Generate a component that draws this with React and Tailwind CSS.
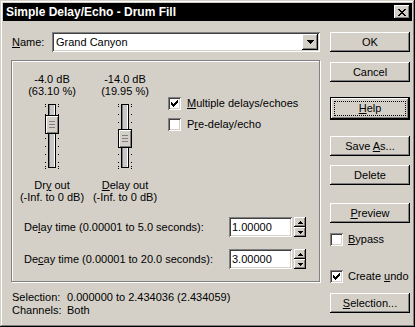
import React from "react";

const raised =
  "bg-[#d4d0c8] shadow-[inset_-1px_-1px_#000,inset_1px_1px_#fff,inset_-2px_-2px_#808080,inset_2px_2px_#d4d0c8]";
const sunken =
  "bg-white shadow-[inset_1px_1px_#808080,inset_-1px_-1px_#fff,inset_2px_2px_#404040,inset_-2px_-2px_#d4d0c8]";

function Pix({ rows, color = "#000" }) {
  const w = rows[0].length;
  const h = rows.length;
  const rects = [];
  rows.forEach((r, y) => {
    for (let x = 0; x < r.length; x++) {
      if (r[x] === "#") rects.push(<rect key={`${x}-${y}`} x={x} y={y} width="1" height="1" fill={color} />);
    }
  });
  return (
    <svg width={w} height={h} viewBox={`0 0 ${w} ${h}`} shapeRendering="crispEdges">
      {rects}
    </svg>
  );
}

const CHECK = ["......#", ".....##", "#...###", "##.###.", "#####..", ".###...", "..#...."];
const XMARK = ["##....##", ".##..##.", "..####..", "...##...", "..####..", ".##..##.", "##....##"];
const DOWN = ["#######", ".#####.", "..###..", "...#..."];
const SDOWN = ["#####", ".###.", "..#.."];
const SUP = ["..#..", ".###.", "#####"];

function U({ children }) {
  return <span className="underline underline-offset-[1px]">{children}</span>;
}

function Check({ checked }) {
  return (
    <div className={`${sunken} w-[13px] h-[13px] shrink-0 flex items-center justify-center`}>
      {checked && <Pix rows={CHECK} />}
    </div>
  );
}

function Btn({ children, className = "" }) {
  return (
    <div className={`${raised} w-[80px] h-[20px] flex items-center justify-center ${className}`}>
      <span className="whitespace-pre">{children}</span>
    </div>
  );
}

function Slider({ thumbTop }) {
  const ticks = [2, 4, 12, 20, 28, 36, 44, 52, 60, 64, 66];
  return (
    <div className="relative w-[16px] h-[68px] mt-[5px]">
      {ticks.map((t) => (
        <React.Fragment key={t}>
          <div className="absolute left-[1px] w-[1px] h-[1px] bg-black" style={{ top: t }} />
          <div className="absolute left-[14px] w-[1px] h-[1px] bg-black" style={{ top: t }} />
        </React.Fragment>
      ))}
      <div className="absolute left-[4px] top-[2px] w-[8px] h-[64px] border border-black bg-[#c8c8c8] shadow-[inset_-1px_0_#fff,inset_1px_0_#808080]" />
      <div
        className="absolute left-[1px] w-[14px] h-[19px] border border-black bg-[#d4d0c8] shadow-[inset_1px_1px_#fff,inset_-1px_-1px_#808080] flex flex-col items-center justify-center gap-[2px]"
        style={{ top: thumbTop }}
      >
        <div className="w-[6px] h-[1px] bg-[#808080]" />
        <div className="w-[6px] h-[1px] bg-[#808080]" />
        <div className="w-[6px] h-[1px] bg-[#808080]" />
      </div>
    </div>
  );
}

function SliderCol({ l1, l2, b1, thumbTop, className = "" }) {
  return (
    <div className={`w-[68px] flex flex-col items-center leading-[12px] ${className}`}>
      <div className="whitespace-nowrap">{l1}</div>
      <div className="whitespace-nowrap">{l2}</div>
      <Slider thumbTop={thumbTop} />
      <div className="mt-[9px] whitespace-nowrap">{b1}</div>
      <div className="whitespace-nowrap">(-Inf. to 0 dB)</div>
    </div>
  );
}

function Spin({ value, label, className = "" }) {
  return (
    <div className={`flex items-center h-[20px] pl-[12px] ${className}`}>
      <div className="w-[205px] whitespace-nowrap">{label}</div>
      <div className={`${sunken} w-[63px] h-[20px] flex items-center pl-[3px]`}>{value}</div>
      <div className="ml-[2px] w-[12px] h-[20px] flex flex-col">
        <div className={`${raised} h-[10px] flex items-center justify-center`}>
          <Pix rows={SUP} />
        </div>
        <div className={`${raised} h-[10px] flex items-center justify-center`}>
          <Pix rows={SDOWN} />
        </div>
      </div>
    </div>
  );
}

export default function App() {
  return (
    <div className="w-[415px] h-[327px] bg-[#d4d0c8] p-[3px] flex flex-col overflow-hidden text-[11px] text-black font-['Liberation_Sans',Arial,sans-serif] shadow-[inset_-1px_-1px_#000,inset_1px_1px_#d4d0c8,inset_-2px_-2px_#808080,inset_2px_2px_#fff]">
      <div className="h-[18px] bg-black flex items-center pl-[3px] pr-[2px] shrink-0">
        <span className="flex-1 text-white font-bold text-[12px] whitespace-nowrap">Simple Delay/Echo - Drum Fill</span>
        <div className={`${raised} w-[16px] h-[14px] flex items-center justify-center`}>
          <Pix rows={XMARK} />
        </div>
      </div>

      <div className="flex flex-1 pl-[8px]">
        <div className="w-[310px] flex flex-col pt-[11px]">
          <div className="flex items-center h-[20px]">
            <div className="w-[41px] pl-[1px]">
              <U>N</U>ame:
            </div>
            <div className={`${sunken} h-[20px] w-[268px] flex items-center pl-[4px] pr-[2px]`}>
              <span className="flex-1">Grand Canyon</span>
              <div className={`${raised} w-[16px] h-[16px] flex items-center justify-center`}>
                <Pix rows={DOWN} />
              </div>
            </div>
          </div>

          <div className="mt-[8px] w-[309px] h-[222px] border border-[#808080] shadow-[inset_1px_1px_#fff,1px_1px_#fff] flex flex-col">
            <div className="flex pt-[12px]">
              <SliderCol l1="-4.0 dB" l2="(63.10 %)" b1={<>Dr<U>y</U> out</>} thumbTop={13} className="ml-[6px]" />
              <SliderCol l1="-14.0 dB" l2="(19.95 %)" b1={<><U>D</U>elay out</>} thumbTop={27} className="ml-[5px]" />
              <div className="ml-[9px] mt-[24px] flex flex-col">
                <div className="flex items-center h-[13px]">
                  <Check checked />
                  <span className="ml-[6px] whitespace-nowrap">
                    <U>M</U>ultiple delays/echoes
                  </span>
                </div>
                <div className="flex items-center h-[13px] mt-[8px]">
                  <Check />
                  <span className="ml-[6px] whitespace-nowrap">
                    P<U>r</U>e-delay/echo
                  </span>
                </div>
              </div>
            </div>
            <Spin className="mt-[14px]" value="1.00000" label={<>De<U>l</U>ay time (0.00001 to 5.0 seconds):</>} />
            <Spin className="mt-[12px]" value="3.00000" label={<>De<U>c</U>ay time (0.00001 to 20.0 seconds):</>} />
          </div>

          <div className="mt-[9px] grid grid-cols-[56px_1fr] leading-[13px]">
            <div className="pl-[1px]">Selection:</div>
            <div>0.000000 to 2.434036 (2.434059)</div>
            <div className="pl-[1px]">Channels:</div>
            <div>Both</div>
          </div>
        </div>

        <div className="ml-[9px] w-[80px] flex flex-col pt-[11px]">
          <Btn>OK</Btn>
          <Btn className="mt-[10px]">Cancel</Btn>
          <div className="mt-[15px] w-[80px] h-[23px] border border-black">
            <div className={`${raised} w-full h-full p-[3px] flex`}>
              <div className="flex-1 border border-dotted border-black flex items-center justify-center">
                <span>
                  <U>H</U>elp
                </span>
              </div>
            </div>
          </div>
          <Btn className="mt-[16px]">
            {"Save "}
            <U>A</U>s...
          </Btn>
          <Btn className="mt-[9px]">Delete</Btn>
          <Btn className="mt-[18px]">
            <U>P</U>review
          </Btn>
          <div className="mt-[10px] flex items-center h-[13px]">
            <Check />
            <span className="ml-[5px]">
              <U>B</U>ypass
            </span>
          </div>
          <div className="mt-[24px] flex items-center h-[13px]">
            <Check checked />
            <span className="ml-[5px] whitespace-nowrap">
              {"Create "}
              <U>u</U>ndo
            </span>
          </div>
          <Btn className="mt-[10px]">
            <U>S</U>election...
          </Btn>
        </div>
      </div>
    </div>
  );
}
